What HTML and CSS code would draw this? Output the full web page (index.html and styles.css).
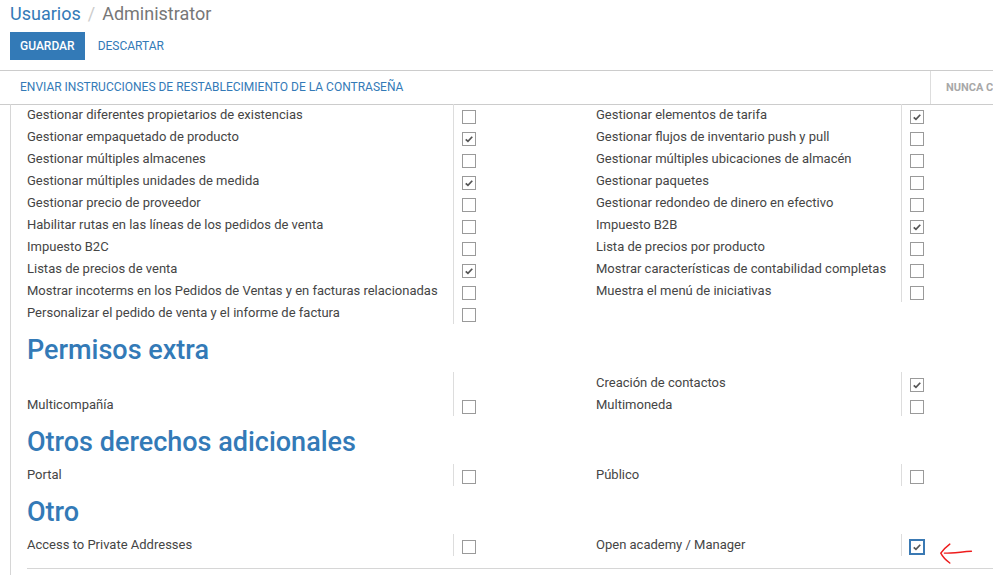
FILE: index.html
```html
<!DOCTYPE html>
<html lang="es">
<head>
<meta charset="utf-8">
<title>Usuarios / Administrator</title>
<link rel="stylesheet" href="styles.css">
</head>
<body>
<div class="control-panel">
  <div class="breadcrumb">
    <span class="crumb-link">Usuarios</span><span class="crumb-sep">/</span><span class="crumb-active">Administrator</span>
  </div>
  <div class="buttons">
    <button class="btn btn-primary">GUARDAR</button>
    <button class="btn btn-link">DESCARTAR</button>
  </div>
</div>

<div class="statusbar">
  <div class="statusbar-left">
    <button class="btn-status">ENVIAR INSTRUCCIONES DE RESTABLECIMIENTO DE LA CONTRASEÑA</button>
  </div>
  <div class="statusbar-right">NUNCA CONECTADO</div>
</div>

<div class="sheet">
  <div class="group-grid">
    <div class="lbl">Gestionar diferentes propietarios de existencias</div><div class="fld"><span class="cb"></span></div>
    <div class="lbl">Gestionar elementos de tarifa</div><div class="fld"><span class="cb checked"><svg viewBox="0 0 14 14"><path d="M3.2 7.3 L5.8 9.8 L10.8 4.4"/></svg></span></div>

    <div class="lbl">Gestionar empaquetado de producto</div><div class="fld"><span class="cb checked"><svg viewBox="0 0 14 14"><path d="M3.2 7.3 L5.8 9.8 L10.8 4.4"/></svg></span></div>
    <div class="lbl">Gestionar flujos de inventario push y pull</div><div class="fld"><span class="cb"></span></div>

    <div class="lbl">Gestionar múltiples almacenes</div><div class="fld"><span class="cb"></span></div>
    <div class="lbl">Gestionar múltiples ubicaciones de almacén</div><div class="fld"><span class="cb"></span></div>

    <div class="lbl">Gestionar múltiples unidades de medida</div><div class="fld"><span class="cb checked"><svg viewBox="0 0 14 14"><path d="M3.2 7.3 L5.8 9.8 L10.8 4.4"/></svg></span></div>
    <div class="lbl">Gestionar paquetes</div><div class="fld"><span class="cb"></span></div>

    <div class="lbl">Gestionar precio de proveedor</div><div class="fld"><span class="cb"></span></div>
    <div class="lbl">Gestionar redondeo de dinero en efectivo</div><div class="fld"><span class="cb"></span></div>

    <div class="lbl">Habilitar rutas en las líneas de los pedidos de venta</div><div class="fld"><span class="cb"></span></div>
    <div class="lbl">Impuesto B2B</div><div class="fld"><span class="cb checked"><svg viewBox="0 0 14 14"><path d="M3.2 7.3 L5.8 9.8 L10.8 4.4"/></svg></span></div>

    <div class="lbl">Impuesto B2C</div><div class="fld"><span class="cb"></span></div>
    <div class="lbl">Lista de precios por producto</div><div class="fld"><span class="cb"></span></div>

    <div class="lbl">Listas de precios de venta</div><div class="fld"><span class="cb checked"><svg viewBox="0 0 14 14"><path d="M3.2 7.3 L5.8 9.8 L10.8 4.4"/></svg></span></div>
    <div class="lbl">Mostrar características de contabilidad completas</div><div class="fld"><span class="cb"></span></div>

    <div class="lbl">Mostrar incoterms en los Pedidos de Ventas y en facturas relacionadas</div><div class="fld"><span class="cb"></span></div>
    <div class="lbl">Muestra el menú de iniciativas</div><div class="fld"><span class="cb"></span></div>

    <div class="lbl">Personalizar el pedido de venta y el informe de factura</div><div class="fld"><span class="cb"></span></div>
    <div class="lbl"></div><div class="empty"></div>
  </div>

  <h2 class="section-title">Permisos extra</h2>
  <div class="group-grid">
    <div class="lbl"></div><div class="fld"></div>
    <div class="lbl">Creación de contactos</div><div class="fld"><span class="cb checked"><svg viewBox="0 0 14 14"><path d="M3.2 7.3 L5.8 9.8 L10.8 4.4"/></svg></span></div>

    <div class="lbl">Multicompañía</div><div class="fld"><span class="cb"></span></div>
    <div class="lbl">Multimoneda</div><div class="fld"><span class="cb"></span></div>
  </div>

  <h2 class="section-title">Otros derechos adicionales</h2>
  <div class="group-grid">
    <div class="lbl">Portal</div><div class="fld"><span class="cb"></span></div>
    <div class="lbl">Público</div><div class="fld"><span class="cb"></span></div>
  </div>

  <h2 class="section-title">Otro</h2>
  <div class="group-grid">
    <div class="lbl">Access to Private Addresses</div><div class="fld"><span class="cb"></span></div>
    <div class="lbl">Open academy / Manager</div><div class="fld fld-annotated"><span class="cb checked focused"><svg viewBox="0 0 14 14"><path d="M3.2 7.3 L5.8 9.8 L10.8 4.4"/></svg></span>
      <svg class="red-arrow" viewBox="0 0 40 26"><path d="M12 2 C8 5 4 9 2 12 C4 16 8 20 12 23"/><path d="M6 12 C14 12 22 11 36 10"/></svg>
    </div>
  </div>

  <div class="sheet-sep"></div>
</div>
</body>
</html>
```

FILE: styles.css
```css
html, body {
  margin: 0;
  padding: 0;
  background: #ffffff;
  overflow: hidden;
}

body {
  width: 993px;
  height: 575px;
  font-family: Roboto, "Liberation Sans", Arial, sans-serif;
  color: #454545;
}

.control-panel {
  padding: 2px 0 0 10px;
}

.breadcrumb {
  font-size: 18px;
  line-height: 24px;
  white-space: nowrap;
}

.crumb-link {
  color: #337ab7;
}

.crumb-sep {
  color: #cccccc;
  margin: 0 7px 0 7px;
}

.crumb-active {
  color: #777777;
}

.buttons {
  display: flex;
  gap: 3px;
  margin-top: 6px;
}

.btn {
  font-family: inherit;
  font-size: 12px;
  height: 28px;
  padding: 0 10px;
  border: 0;
  border-radius: 0;
  line-height: 28px;
  cursor: pointer;
}

.btn-primary {
  background: #337ab7;
  color: #ffffff;
  font-weight: 500;
}

.btn-link {
  background: transparent;
  color: #337ab7;
}

.statusbar {
  display: flex;
  margin-top: 10px;
  height: 33px;
  border-top: 1px solid #cccccc;
  border-bottom: 1px solid #cccccc;
  white-space: nowrap;
}

.statusbar-left {
  width: 930px;
  flex-shrink: 0;
  display: flex;
  align-items: center;
}

.btn-status {
  font-family: inherit;
  font-size: 12px;
  color: #337ab7;
  background: transparent;
  border: 0;
  padding: 0 0 0 20px;
  height: 33px;
  line-height: 33px;
}

.statusbar-right {
  border-left: 1px solid #dddddd;
  padding-left: 15px;
  font-size: 11px;
  font-weight: bold;
  color: #a8a8a8;
  line-height: 33px;
}

.sheet {
  margin-left: 10px;
  border-left: 1px solid #d6d6d6;
  padding-left: 16px;
  padding-top: 0;
  height: 480px;
  margin-top: -1px;
}

.group-grid {
  display: grid;
  grid-template-columns: 426px 143px 305px 1fr;
  grid-auto-rows: 22px;
}

.lbl {
  font-size: 13px;
  line-height: 22px;
  white-space: nowrap;
  color: #454545;
}

.fld {
  border-left: 1px solid #dddddd;
  padding-left: 8px;
}

.fld-annotated {
  position: relative;
}

.cb {
  display: block;
  box-sizing: border-box;
  width: 14px;
  height: 14px;
  margin-top: 6px;
  border: 1px solid #9a9a9a;
  background: #ffffff;
}

.cb svg {
  display: block;
  width: 12px;
  height: 12px;
}

.cb svg path {
  fill: none;
  stroke: #555555;
  stroke-width: 2;
}

.cb.focused {
  width: 16px;
  height: 16px;
  margin-top: 5px;
  margin-left: -1px;
  border: 2px solid #3a79b3;
}

.red-arrow {
  position: absolute;
  left: 37px;
  top: 8px;
  width: 36px;
  height: 24px;
}

.red-arrow path {
  fill: none;
  stroke: #ee1c1c;
  stroke-width: 1.6;
  stroke-linecap: round;
}

.section-title {
  margin: 11px 0 7px 0;
  font-size: 27px;
  line-height: 30px;
  font-weight: 500;
  color: #337ab7;
  white-space: nowrap;
}

.sheet-sep {
  margin-top: 12px;
  border-top: 1px solid #d6d6d6;
}
```
